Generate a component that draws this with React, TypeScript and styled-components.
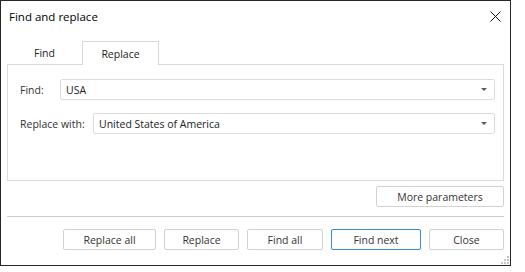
import React from 'react';
import styled, { createGlobalStyle } from 'styled-components';

const GlobalStyle = createGlobalStyle`
  html, body {
    margin: 0;
    padding: 0;
    background: #ffffff;
  }
  body {
    font-family: 'Open Sans', 'Noto Sans', sans-serif;
    font-size: 10.5px;
    color: #333333;
  }
`;

const Window = styled.div`
  position: relative;
  box-sizing: border-box;
  width: 511px;
  height: 266px;
  border: 1px solid #262626;
  background: #ffffff;
  display: flex;
  flex-direction: column;
`;

const TitleBar = styled.div`
  height: 30px;
  display: flex;
  align-items: center;
  justify-content: space-between;
  padding: 0 8px 0 8px;
`;

const Title = styled.span`
  font-size: 11.5px;
  color: #000000;
`;

const CloseIcon = styled.svg`
  width: 11px;
  height: 11px;
  margin-right: 1px;
`;

const TabStrip = styled.div`
  display: flex;
  align-items: flex-end;
  margin: 10px 6px 0 6px;
  height: 23px;
`;

const Tab = styled.div<{ $active?: boolean; $width: number }>`
  box-sizing: border-box;
  width: ${(p) => p.$width}px;
  height: ${(p) => (p.$active ? 24 : 23)}px;
  display: flex;
  align-items: center;
  justify-content: center;
  font-size: 10.5px;
  color: #222;
  background: #ffffff;
  border: ${(p) => (p.$active ? '1px solid #d9d9d9' : 'none')};
  border-bottom: none;
  margin-bottom: ${(p) => (p.$active ? -1 : 0)}px;
  position: relative;
  z-index: ${(p) => (p.$active ? 1 : 0)};
  padding-top: 1px;
`;

const Panel = styled.div`
  box-sizing: border-box;
  margin: 0 6px;
  height: 117px;
  border: 1px solid #dadada;
  padding: 14px 8px 0 12px;
  display: flex;
  flex-direction: column;
  gap: 13px;
`;

const Row = styled.div`
  display: flex;
  align-items: center;
`;

const Label = styled.label<{ $width: number }>`
  width: ${(p) => p.$width}px;
  flex: none;
  color: #333;
`;

const Combo = styled.div`
  box-sizing: border-box;
  flex: 1;
  height: 21px;
  border: 1px solid #dcdcdc;
  border-radius: 2px;
  display: flex;
  align-items: center;
  padding: 0 7px 0 5px;
  color: #222;
`;

const ComboText = styled.span`
  flex: 1;
`;

const Arrow = styled.span`
  width: 0;
  height: 0;
  border-left: 3px solid transparent;
  border-right: 3px solid transparent;
  border-top: 3px solid #5a5a5a;
`;

const MoreRow = styled.div`
  display: flex;
  justify-content: flex-end;
  margin: 5px 6px 0 6px;
`;

const Button = styled.button<{ $width: number; $primary?: boolean }>`
  box-sizing: border-box;
  width: ${(p) => p.$width}px;
  height: 21px;
  background: #ffffff;
  border: 1px solid ${(p) => (p.$primary ? '#3a8cc6' : '#d2d2d2')};
  border-radius: 2px;
  font-family: 'Open Sans', 'Noto Sans', sans-serif;
  font-size: 10.5px;
  color: #333;
  padding: 0;
  display: flex;
  align-items: center;
  justify-content: center;
`;

const Separator = styled.div`
  height: 1px;
  background: #cccccc;
  margin: 9px 6px 0 6px;
`;

const ButtonRow = styled.div`
  display: flex;
  justify-content: flex-end;
  gap: 8px;
  margin: 12px 6px 0 6px;
`;

const Grip = styled.svg`
  position: absolute;
  right: 1px;
  bottom: 1px;
  width: 8px;
  height: 8px;
`;

const ComboBox = ({ value }: { value: string }) => (
  <Combo>
    <ComboText>{value}</ComboText>
    <Arrow />
  </Combo>
);

export default function App() {
  return (
    <>
      <GlobalStyle />
      <Window>
        <TitleBar>
          <Title>Find and replace</Title>
          <CloseIcon viewBox="0 0 11 11">
            <path d="M0.5 0.5 L10.5 10.5 M10.5 0.5 L0.5 10.5" stroke="#111" strokeWidth="1" fill="none" />
          </CloseIcon>
        </TitleBar>
        <TabStrip>
          <Tab $width={75}>Find</Tab>
          <Tab $width={77} $active>
            Replace
          </Tab>
        </TabStrip>
        <Panel>
          <Row>
            <Label $width={40}>Find:</Label>
            <ComboBox value="USA" />
          </Row>
          <Row>
            <Label $width={73}>Replace with:</Label>
            <ComboBox value="United States of America" />
          </Row>
        </Panel>
        <MoreRow>
          <Button $width={128}>More parameters</Button>
        </MoreRow>
        <Separator />
        <ButtonRow>
          <Button $width={93}>Replace all</Button>
          <Button $width={75}>Replace</Button>
          <Button $width={76}>Find all</Button>
          <Button $width={90} $primary>
            Find next
          </Button>
          <Button $width={75}>Close</Button>
        </ButtonRow>
        <Grip viewBox="0 0 8 8">
          {[
            [6, 0],
            [3, 3],
            [6, 3],
            [0, 6],
            [3, 6],
            [6, 6],
          ].map(([x, y]) => (
            <rect key={`${x}-${y}`} x={x} y={y} width="2" height="2" fill="#c8c8c8" />
          ))}
        </Grip>
      </Window>
    </>
  );
}
